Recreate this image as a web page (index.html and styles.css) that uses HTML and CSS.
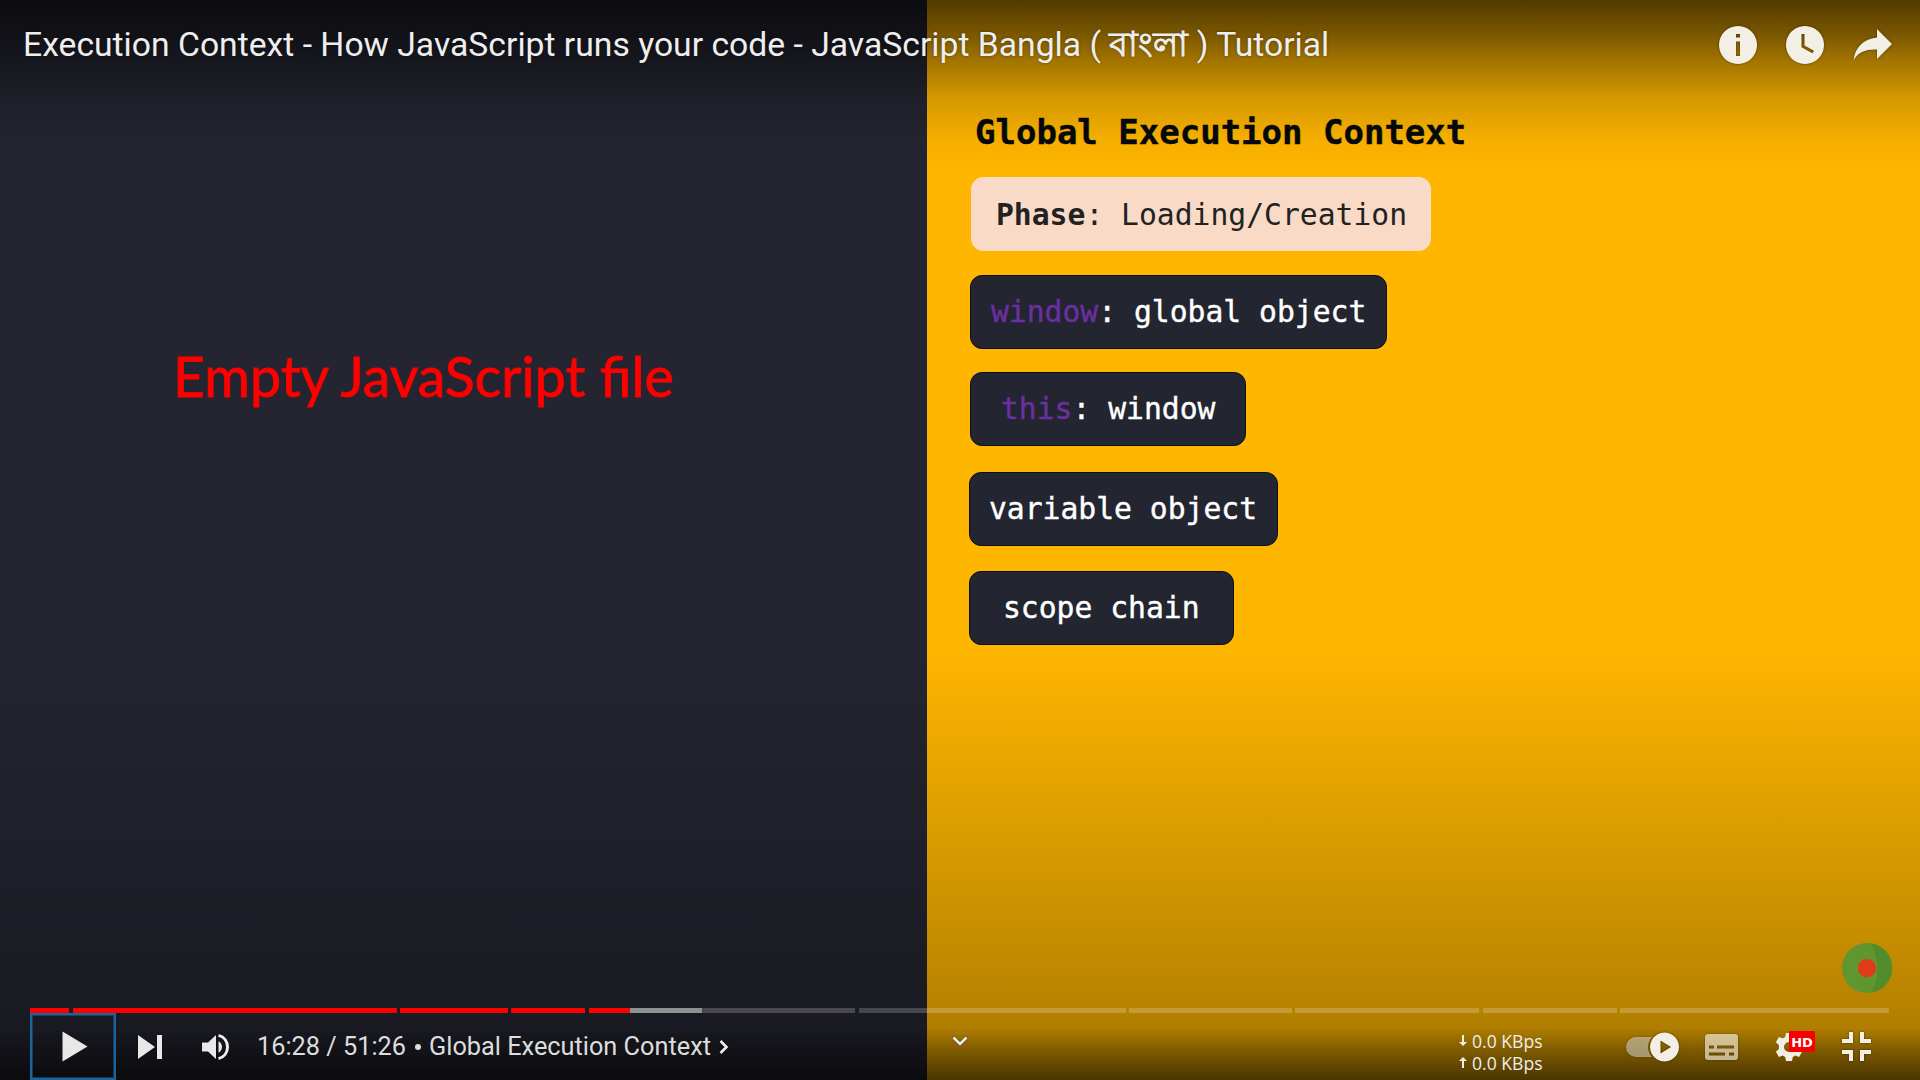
FILE: index.html
```html
<!DOCTYPE html>
<html lang="en">
<head>
<meta charset="utf-8">
<title>Execution Context - JavaScript Bangla Tutorial</title>
<link rel="stylesheet" href="styles.css">
</head>
<body>
<main class="player">
  <section class="slide">
    <div class="editor"><p class="note">Empty JavaScript file</p></div>
    <div class="context">
      <h1>Global Execution Context</h1>
      <div class="card phase"><b>Phase</b>: Loading/Creation</div>
      <div class="card win"><i>window</i>: global object</div>
      <div class="card this"><i>this</i>: window</div>
      <div class="card variable">variable object</div>
      <div class="card scope">scope chain</div>
    </div>
  </section>

  <div class="overlay">
    <header class="topbar">
      <div class="title"><span>Execution Context - How JavaScript runs your code - JavaScript Bangla ( <span class="bn" lang="bn">বাংলা</span> ) Tutorial</span></div>
      <div class="actions">
        <svg width="40" height="40" viewBox="0 0 40 40"><path fill-rule="evenodd" d="M20 1a19 19 0 1 0 .01 0zM18 9h4v3.500h-4zM18 16.500h4v14.500h-4z"/></svg>
        <svg width="40" height="40" viewBox="0 0 40 40"><path fill-rule="evenodd" d="M20 1a19 19 0 1 0 .01 0zM16.500 9h3v11.500l9.500 5.200-1.600 2.600-10.900-6z"/></svg>
        <svg width="40" height="40" viewBox="0 0 40 40"><path d="M25 4l15 15-15 15v-9.500C14 24 6 27 1.500 35.500C3 23 10.500 14 25 12.500z"/></svg>
      </div>
    </header>

    <footer class="controls">
      <div class="progress">
        <span class="seg played wide"></span><span class="seg played"></span><span class="seg played"></span><span class="seg played wide"></span><span class="seg current wide"></span><span class="seg"></span><span class="seg"></span><span class="seg wide"></span><span class="seg"></span><span class="seg last"></span>
      </div>
      <div class="buttons">
        <button class="play"><svg width="26" height="31" viewBox="0 0 26 31"><path d="M.5 .5L25.500 15.500.5 30.500z"/></svg></button>
        <svg class="next" width="24" height="24" viewBox="0 0 24 24"><path d="M0 0l17 12L0 24zM19 0h5v24h-5z"/></svg>
        <svg class="volume" width="28" height="28" viewBox="0 0 28 28"><path d="M0 9.500h6L14 2v24l-8-7.500H0zM16.500 8.300c4.700 2 4.700 9.400 0 11.400z"/><path class="wave" d="M16.500 2.400c12 3 12 20.200 0 23.200"/></svg>
        <span class="time">16:28 / 51:26</span>
        <span class="dot"></span>
        <span class="chapter">Global Execution Context</span>
        <svg class="right" width="10" height="14" viewBox="0 0 10 14"><path d="M1.500 1l6 6-6 6"/></svg>
        <svg class="down" width="16" height="10" viewBox="0 0 16 10"><path d="M1.500 1.500L8 8l6.500-6.500"/></svg>
        <div class="speed">
          <div><svg width="8" height="12" viewBox="0 0 8 12"><path d="M3 0h2v7h3l-4 4-4-4h3z"/></svg><span>0.0 KBps</span></div>
          <div><svg width="8" height="12" viewBox="0 0 8 12"><path d="M3 11h2V4h3L4 0 0 4h3z"/></svg><span>0.0 KBps</span></div>
        </div>
        <svg class="auto" width="54" height="30" viewBox="0 0 54 30"><path d="M10 5H26A14.500 14.500 0 0 0 26 25H10A10 10 0 0 1 10 5z" opacity=".5"/><path fill-rule="evenodd" d="M38.500 .5a14.500 14.500 0 1 0 .01 0zM34.500 8.500v13l10.500-6.500z"/></svg>
        <svg class="subs" width="33" height="26" viewBox="0 0 33 26"><path fill-rule="evenodd" d="M3 0h27q3 0 3 3v20q0 3-3 3H3q-3 0-3-3V3q0-3 3-3zM4 11.500v3h5v-3zM12 11.500v3h17v-3zM4 18.500v3h16v-3zM24 18.500v3h5v-3z"/></svg>
        <div class="settings">
          <svg width="28" height="28" viewBox="0 0 28 28"><path fill-rule="evenodd" d="M11 0h6l.8 4 2.500 1.400 3.800-1.300 3 5.200-3 2.600v4.200l3 2.600-3 5.200-3.800-1.300-2.500 1.400-.8 4h-6l-.8-4-2.500-1.400-3.800 1.300-3-5.200 3-2.600v-4.200l-3-2.600 3-5.200 3.800 1.300L10.200 4zM14 9a5 5 0 1 0 .01 0z"/></svg>
          <span class="hd">HD</span>
        </div>
        <svg class="exit" width="29" height="29" viewBox="0 0 29 29"><path d="M7 0h4v11H0V7h7zM18 0h4v7h7v4H18zM0 18h11v11H7v-7H0zM18 18h11v4h-7v7h-4z"/></svg>
      </div>
    </footer>
    <svg class="record" width="50" height="50" viewBox="0 0 50 50"><circle cx="25" cy="25" r="25" fill="#5f9630"/><path d="M28.500 0.200a25 25 0 0 1 0 49.600c9-13 9-36 0-49.600z" fill="#528c2d"/><circle cx="25" cy="25" r="9.200" fill="#e03c1a"/></svg>
  </div>
</main>
</body>
</html>
```
FILE: styles.css
```css
* { box-sizing: border-box; }
body { margin: 0; background: #000; }
svg { display: block; flex: none; fill: #f4efe4; }
.player { position: relative; width: 1920px; height: 1080px; overflow: hidden; }

.slide { display: grid; grid-template-columns: 927px 1fr; height: 100%; }
.editor { background: #242530; padding: 340px 0 0 173px; }
.note { margin: 0; width: max-content; font: 55.500px/72px Lato, sans-serif; color: #f00; -webkit-text-stroke: .8px #f00; }
.context { background: #ffb600; padding: 110px 0 0 42px; display: flex; flex-direction: column; align-items: flex-start; font-family: "DejaVu Sans Mono", monospace; }
h1 { margin: 0 0 23px 6px; font-size: 34px; line-height: 45px; height: 44px; color: #05080d; white-space: pre; -webkit-text-stroke: .4px #05080d; }
.card { height: 74px; border-radius: 12px; background: #232530; border: 1px solid #0b0d1c; color: #fff; font-size: 29.700px; line-height: 72px; white-space: pre; -webkit-text-stroke: .4px currentColor; }
.card i { font-style: normal; color: #6a2fa0; }
.phase { margin-left: 2px; width: 460px; padding-left: 24px; line-height: 73px; background: #f9dac6; border-color: #f9dac6; color: #222; -webkit-text-stroke: 0; }
.win { margin: 24px 0 0 1px; width: 417px; padding-left: 20px; }
.this { margin: 23px 0 0 1px; width: 276px; padding-left: 30px; }
.variable { margin-top: 26px; width: 309px; padding-left: 19px; }
.scope { margin-top: 25px; width: 265px; padding-left: 33px; }

.overlay {
  position: absolute; inset: 0; display: flex; flex-direction: column; justify-content: space-between;
  font-family: Roboto, sans-serif; color: #eee;
  background:
    linear-gradient(to bottom, rgba(0,0,0,.68) 0, rgba(0,0,0,.53) 33px, rgba(0,0,0,.37) 60px, rgba(0,0,0,.16) 100px, rgba(0,0,0,.04) 140px, transparent 175px),
    linear-gradient(to top, rgba(0,0,0,.71) 0, rgba(0,0,0,.5) 30px, rgba(0,0,0,.31) 52px, rgba(0,0,0,.28) 80px, rgba(0,0,0,.21) 160px, rgba(0,0,0,.02) 410px, transparent 440px);
}
.topbar { display: flex; justify-content: space-between; align-items: center; height: 90px; padding: 0 28px 0 23px; }
.title { font-size: 33.700px; line-height: 44px; white-space: nowrap; text-shadow: 0 0 3px rgba(0,0,0,.4); }
.bn { -webkit-text-stroke: .9px #eee; }
.actions { display: flex; gap: 27px; }
.actions svg, .buttons > svg { filter: drop-shadow(0 0 1px rgba(0,0,0,.5)); }

.controls { height: 72px; }
.progress { display: grid; height: 5px; margin-left: 30px; width: 1859px; grid-template-columns: 43px 327px 111px 78px 270px 270px 166px 188px 137px 269px; }
.seg { background: rgba(255,255,255,.2); margin-right: 3px; }
.wide { margin-right: 4px; }
.last { margin-right: 0; }
.played { background: #f00; }
.current { background: linear-gradient(to right, #f00 41px, #8e8f91 41px, #8e8f91 113px, rgba(255,255,255,.2) 113px); }
.buttons { display: flex; align-items: center; height: 67px; padding-left: 30px; }
.play { width: 86px; height: 67px; padding: 0 0 0 30px; background: none; border: 2px solid #1b649c; box-shadow: inset 0 0 0 1px rgba(27,100,156,.5); flex: none; }
.play svg, .next, .volume { fill: #e8e8e8; }
.next { margin-left: 22px; }
.volume { margin-left: 40px; }
.wave, .right, .down { fill: none; stroke: #eee; stroke-width: 2.600; }
.wave { stroke-width: 3; }
.time { margin-left: 27px; width: 150px; font-size: 25.300px; white-space: nowrap; color: #ddd; }
.dot { margin-left: 8px; width: 6px; height: 6px; border-radius: 50%; background: #ddd; }
.chapter { margin-left: 8px; width: 284px; font-size: 25.300px; white-space: nowrap; color: #ddd; }
.right { margin-left: 6px; }
.down { margin: -11px 0 0 223px; }
.speed { margin-left: 491px; width: 84px; font: 17.600px/22px "Open Sans", sans-serif; padding-top: 11px; }
.speed div { display: flex; align-items: center; gap: 5px; white-space: nowrap; }
.auto { margin-left: 83px; }
.subs { margin-left: 25px; opacity: .65; }
.settings { position: relative; margin-left: 37px; }
.hd { position: absolute; left: 14px; top: -2px; width: 26px; height: 21px; border-radius: 1px; background: #f80000; color: #fff; font: bold 13px/23px "DejaVu Sans", sans-serif; text-align: center; }
.exit { margin-left: 39px; }
.record { position: absolute; left: 1842px; top: 943px; }
```
